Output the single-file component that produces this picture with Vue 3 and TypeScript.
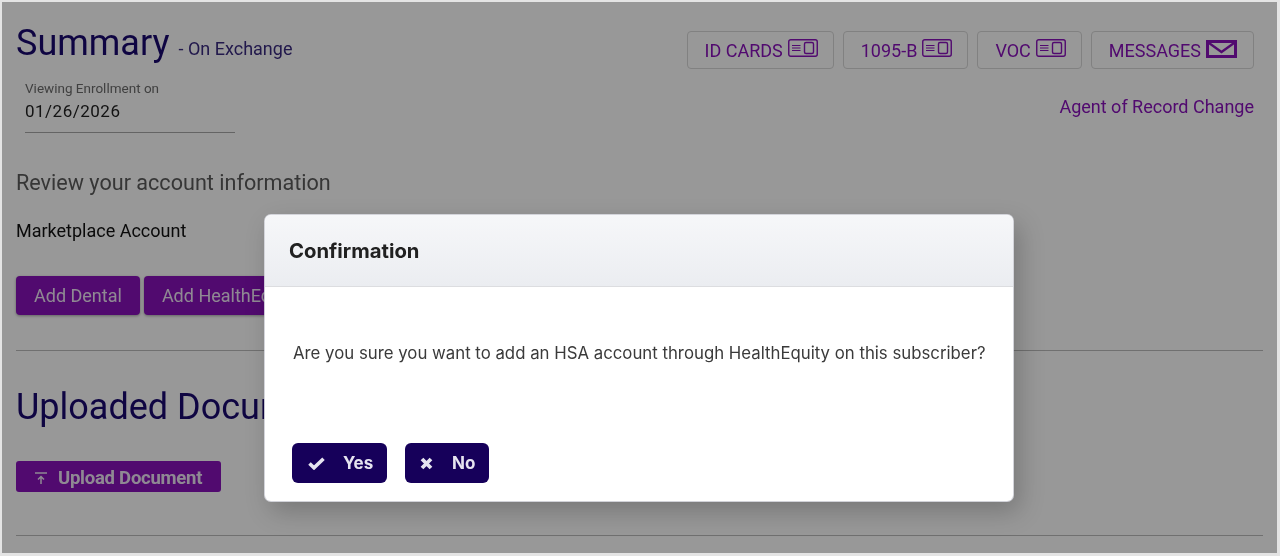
<script setup lang="ts">
const topButtons = [
  { label: 'ID CARDS', icon: 'card' },
  { label: '1095-B', icon: 'card' },
  { label: 'VOC', icon: 'card' },
  { label: 'MESSAGES', icon: 'mail' },
]
</script>

<template>
  <div class="shot">
    <div class="page">
      <header class="head">
        <div class="head-left">
          <div class="title-row">
            <h1>Summary</h1>
            <span class="exchange">- On Exchange</span>
          </div>
          <div class="date-field">
            <label>Viewing Enrollment on</label>
            <div class="date-value">01/26/2026</div>
          </div>
        </div>
        <div class="head-right">
          <div class="top-buttons">
            <button v-for="b in topButtons" :key="b.label" class="outline-btn">
              <span>{{ b.label }}</span>
              <svg v-if="b.icon === 'card'" class="ico-card" width="30" height="18" viewBox="0 0 30 18" fill="none" stroke="currentColor">
                <rect x="0.75" y="0.75" width="28.5" height="16.5" rx="2" stroke-width="1.4" />
                <path d="M4 6.500h8.500M4 9h8.500M4 11.500h8.500" stroke-width="1.2" />
                <rect x="16.500" y="3.500" width="9" height="11" rx="1.5" stroke-width="1.4" />
              </svg>
              <svg v-else class="ico-mail" width="31" height="18" viewBox="0 0 31 18">
                <path fill="currentColor" fill-rule="evenodd" d="M0 0h31v18H0zM5 3l10.500 7.500L26 3zM3 4.500V15h25V4.500L15.500 13.500z" />
              </svg>
            </button>
          </div>
          <a class="agent-link">Agent of Record Change</a>
        </div>
      </header>

      <h2 class="review">Review your account information</h2>
      <p class="account">Marketplace Account</p>
      <div class="add-row">
        <button class="solid-btn">Add Dental</button>
        <button class="solid-btn">Add HealthEquity HSA</button>
      </div>
      <hr class="rule" />

      <h1 class="docs-title">Uploaded Documents</h1>
      <button class="upload-btn">
        <svg width="14" height="14" viewBox="0 0 14 14" fill="none" stroke="currentColor" stroke-width="1.500">
          <path d="M1 2h12M7 13V6M4 8.500l3-3 3 3" />
        </svg>
        Upload Document
      </button>
      <hr class="rule rule-last" />

      <div class="overlay"></div>

      <section class="dialog">
        <div class="dialog-head">Confirmation</div>
        <div class="dialog-body">
          <p>Are you sure you want to add an HSA account through HealthEquity on this subscriber?</p>
        </div>
        <div class="dialog-foot">
          <button class="confirm-btn yes">
            <svg width="17" height="13" viewBox="0 0 17 13"><path fill="none" stroke="currentColor" stroke-width="3.600" d="M1.500 6.500l4.500 4.300 9.500-9" /></svg>
            Yes
          </button>
          <button class="confirm-btn no">
            <svg width="13" height="13" viewBox="0 0 13 13"><path fill="none" stroke="currentColor" stroke-width="3.800" d="M2 2l9 9M11 2l-9 9" /></svg>
            No
          </button>
        </div>
      </section>
    </div>
  </div>
</template>

<style>
html, body { margin: 0; background: #e4e4e4; }
</style>

<style scoped>
.shot {
  width: 1280px;
  height: 556px;
  box-sizing: border-box;
  padding: 2px 3px 3px 2px;
  font-family: Roboto, "Liberation Sans", sans-serif;
  overflow: hidden;
  filter: blur(0.5px);
}
.page {
  position: relative;
  height: 551px;
  background: #fff;
  padding: 0 14px;
  box-sizing: border-box;
  overflow: hidden;
}
.head {
  display: flex;
  justify-content: space-between;
  height: 131px;
  padding-right: 9px;
}
.title-row {
  display: flex;
  align-items: baseline;
  gap: 9px;
  padding-top: 21px;
}
h1 {
  margin: 0;
  font-size: 36px;
  font-weight: 400;
  line-height: 41px;
  color: #1a0a70;
}
.exchange {
  font-size: 18px;
  color: #3a2a80;
}
.date-field {
  width: 210px;
  margin: 16px 0 0 9px;
  border-bottom: 1px solid #a8a8a8;
  padding-bottom: 10px;
}
.date-field label {
  display: block;
  font-size: 13.500px;
  line-height: 16px;
  color: #6c6c6c;
}
.date-value {
  font-size: 17px;
  line-height: 22px;
  margin-top: 4px;
  letter-spacing: 0.5px;
  color: #222;
}
.head-right {
  display: flex;
  flex-direction: column;
  align-items: flex-end;
  padding-top: 29px;
}
.top-buttons {
  display: flex;
  gap: 9px;
}
.outline-btn {
  display: flex;
  align-items: center;
  gap: 5px;
  height: 38px;
  padding: 0 15px 0 17px;
  border: 1px solid #d8d8d8;
  border-radius: 4px;
  background: transparent;
  font: inherit;
  font-size: 18px;
  color: #8911bb;
}
.ico-card { margin-top: -4px; }
.ico-mail { margin-top: -3px; margin-right: 1px; }
.agent-link {
  margin-top: 27px;
  font-size: 18px;
  line-height: 22px;
  color: #8911bb;
}
.review {
  margin: 37px 0 0;
  font-size: 21.600px;
  line-height: 26px;
  font-weight: 400;
  color: #5c5c5c;
}
.account {
  margin: 24px 0 0;
  font-size: 18px;
  line-height: 22px;
  color: #111;
}
.add-row {
  display: flex;
  gap: 4px;
  margin-top: 34px;
}
.solid-btn {
  height: 39px;
  padding: 0 18px;
  border: 0;
  border-radius: 4px;
  background: #8911bb;
  box-shadow: 0 1px 3px rgba(0, 0, 0, 0.35);
  font: inherit;
  font-size: 18px;
  color: #f0e6f6;
  white-space: nowrap;
}
.rule {
  margin: 35px 0 0;
  border: 0;
  border-top: 1px solid #bdbdbd;
}
.docs-title {
  margin-top: 36px;
}
.upload-btn {
  display: flex;
  align-items: center;
  gap: 10px;
  height: 31px;
  width: 205px;
  margin-top: 33px;
  padding: 3px 0 0 18px;
  border: 0;
  border-radius: 3px;
  background: #8911bb;
  font: inherit;
  font-size: 18.500px;
  font-weight: 700;
  letter-spacing: -0.25px;
  color: #f0e6f6;
  white-space: nowrap;
}
.rule-last { margin-top: 43px; }
.overlay {
  position: absolute;
  inset: 0;
  background: rgba(0, 0, 0, 0.405);
}
.dialog {
  position: absolute;
  left: 263px;
  top: 213px;
  width: 748px;
  height: 286px;
  display: flex;
  flex-direction: column;
  background: #fff;
  border-radius: 6px;
  box-shadow: 0 0 0 1px rgba(218, 220, 226, 0.9), 6px 10px 26px rgba(0, 0, 0, 0.22);
  font-family: Inter, Roboto, sans-serif;
}
.dialog-head {
  height: 72px;
  box-sizing: border-box;
  padding-left: 24px;
  border-bottom: 1px solid #dcdde0;
  border-radius: 6px 6px 0 0;
  background: linear-gradient(#f6f7f9, #ebedf1);
  font-size: 20.300px;
  font-weight: 700;
  line-height: 72px;
  color: #212121;
}
.dialog-body {
  flex: 1;
  padding: 55px 24px 0 28px;
}
.dialog-body p {
  margin: 0;
  font-size: 16.800px;
  line-height: 22px;
  color: #3a3a3a;
  white-space: nowrap;
}
.dialog-foot {
  display: flex;
  gap: 18px;
  padding: 0 0 18px 27px;
}
.confirm-btn {
  display: flex;
  align-items: center;
  height: 40px;
  border: 0;
  border-radius: 6px;
  background: #16005a;
  font: inherit;
  font-size: 17px;
  font-weight: 700;
  color: #e6e4f0;
}
.yes { width: 95px; padding: 0 0 0 16px; gap: 18px; }
.no { width: 84px; padding: 0 0 0 15px; gap: 19px; }
</style>
